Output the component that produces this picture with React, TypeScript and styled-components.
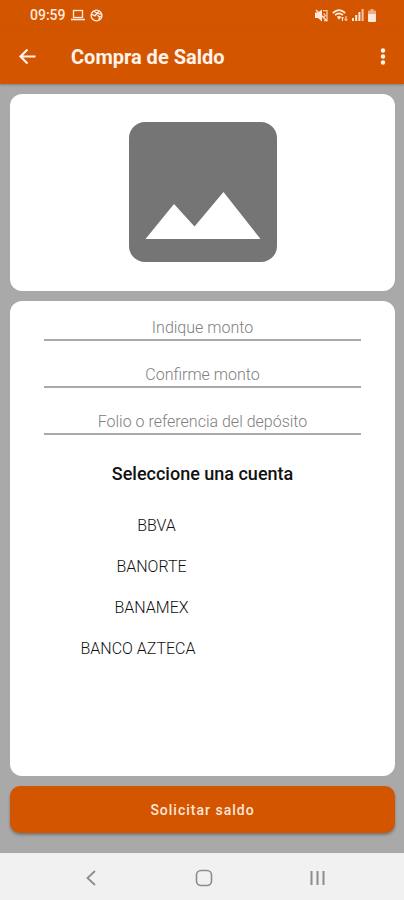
import React from "react";
import styled, { createGlobalStyle } from "styled-components";

const GlobalStyle = createGlobalStyle`
  *, *::before, *::after { box-sizing: border-box; }
  body { margin: 0; background: #a9a9a9; font-family: Roboto, "Liberation Sans", sans-serif; }
  button, input { font: inherit; }
`;

const orange = "#d45500";

const Screen = styled.div`
  display: flex;
  flex-direction: column;
  min-height: 100vh;
  background: #a9a9a9;
`;

const StatusBar = styled.div`
  display: flex;
  align-items: center;
  justify-content: space-between;
  height: 30px;
  padding: 0 28px 0 30px;
  background: ${orange};
  color: #ffe9dc;
  font-size: 14px;
  line-height: 20px;
  font-weight: 500;
`;

const StatusGroup = styled.div<{ $gap: number }>`
  display: flex;
  align-items: center;
  gap: ${({ $gap }) => $gap}px;

  svg { display: block; }
`;

const AppBar = styled.header`
  display: flex;
  align-items: center;
  height: 54px;
  padding: 0 9px 0 15px;
  background: ${orange};
  color: #fff3ec;
  box-shadow: 0 1px 2px rgba(0, 0, 0, 0.25);
`;

const IconButton = styled.button`
  display: flex;
  align-items: center;
  justify-content: center;
  width: 24px;
  height: 40px;
  padding: 0;
  border: 0;
  background: none;
  color: inherit;
`;

const Title = styled.h1`
  flex: 1;
  margin: 0 0 0 32px;
  font-size: 20px;
  line-height: 28px;
  font-weight: 700;
`;

const Content = styled.main`
  display: flex;
  flex: 1;
  flex-direction: column;
  gap: 10px;
  padding: 10px 9px 20px 10px;
`;

const Card = styled.section`
  border-radius: 12px;
  background: #fff;
`;

const PictureCard = styled(Card)`
  display: flex;
  justify-content: center;
  padding: 28px 0 29px;

  svg { display: block; }
`;

const FormCard = styled(Card)`
  display: flex;
  flex: 1;
  flex-direction: column;
  padding: 13px 34px 20px;
`;

const Field = styled.input`
  width: 100%;
  height: 27px;
  margin-bottom: 20px;
  padding: 2px 0 0;
  border: 0;
  border-bottom: 2px solid #aaa;
  border-radius: 0;
  outline: none;
  background: none;
  color: #222;
  font-size: 16px;
  text-align: center;

  &::placeholder { color: #808080; opacity: 1; font-weight: 300; }
`;

const AccountsTitle = styled.h2`
  margin: 7px 0 19px;
  font-size: 18px;
  line-height: 24px;
  font-weight: 500;
  text-align: center;
  color: #111;
`;

const AccountList = styled.ul`
  margin: 0;
  padding: 0;
  list-style: none;
`;

const Account = styled.li<{ $numberWidth: number }>`
  display: flex;
  align-items: center;
  justify-content: center;
  height: 41px;
  padding-right: ${({ $numberWidth }) => $numberWidth}px;
  color: #111;
  font-size: 16px;
  line-height: 20px;
  font-weight: 300;
`;

const SubmitButton = styled.button`
  height: 47px;
  border: 0;
  border-radius: 10px;
  background: ${orange};
  box-shadow: 0 2px 3px rgba(0, 0, 0, 0.3);
  color: #ffe6d8;
  font-size: 14px;
  font-weight: 500;
  letter-spacing: 1px;
`;

const NavBar = styled.nav`
  display: flex;
  align-items: center;
  justify-content: center;
  gap: 89px;
  height: 47px;
  padding: 2px 0 0 4px;
  background: #f1f1f1;
  color: #8c8c8c;
`;

const accounts = [
  { name: "BBVA", numberWidth: 92 },
  { name: "BANORTE", numberWidth: 102 },
  { name: "BANAMEX", numberWidth: 102 },
  { name: "BANCO AZTECA", numberWidth: 129 },
];

const LaptopIcon = () => (
  <svg width="14" height="12" viewBox="0 0 14 12" fill="none" stroke="currentColor" aria-hidden="true">
    <rect x="2.5" y="1.5" width="9" height="7" strokeWidth="1.3" />
    <path d="M0 10.5h14" strokeWidth="1.6" />
  </svg>
);

const BallIcon = () => (
  <svg width="13" height="13" viewBox="0 0 13 13" fill="none" stroke="currentColor" strokeWidth="1.4" aria-hidden="true">
    <circle cx="6.5" cy="6.5" r="5.4" />
    <path d="M1.5 5.2 5 6.8 7 4.4 11.4 5M4 2.2 7 4.4 9 2M7.5 6.2 9.5 8l2-.8M9.5 8 9 10.8" />
  </svg>
);

const MutedIcon = () => (
  <svg width="13" height="13" viewBox="0 0 13 13" fill="none" stroke="currentColor" aria-hidden="true">
    <path d="M0 3.5h3l4-3v12L3 9H0z" fill="currentColor" stroke="none" />
    <path d="M1 1l11 11" strokeWidth="1.3" />
    <path d="M8 1.7h4v9.8H9M8.5 4.5l2 2-2 2" strokeWidth="1.3" opacity=".8" />
  </svg>
);

const WifiIcon = () => (
  <svg width="16" height="13" viewBox="0 0 16 13" fill="none" stroke="currentColor" aria-hidden="true">
    <path d="M.8 4Q7 -1.6 13.2 4M3 6.2q4-3.4 8 0" strokeWidth="1.7" />
    <path d="M4.8 7.8Q7 6 9.2 7.8L7 10.8z" fill="currentColor" stroke="none" />
    <path d="M10.5 12V8M9 9.5 10.5 8 12 9.5M14 7v4.5M12.7 10.3 14 11.7l1.3-1.4" strokeWidth="1" />
  </svg>
);

const SignalIcon = () => (
  <svg width="12" height="12" viewBox="0 0 12 12" fill="currentColor" aria-hidden="true">
    <path d="M0 9h2v3H0zM3.2 6h2v6h-2zM6.4 3h2v9h-2z" />
    <path d="M9.6 0h2v12h-2z" opacity=".75" />
  </svg>
);

const BatteryIcon = () => (
  <svg width="8" height="13" viewBox="0 0 8 13" fill="currentColor" aria-hidden="true">
    <path d="M2.5 0h3v1.5H7q1 0 1 1V5H0V2.5q0-1 1-1h1.5z" opacity=".6" />
    <path d="M0 5h8v7q0 1-1 1H1q-1 0-1-1z" />
  </svg>
);

const BackArrowIcon = () => (
  <svg width="24" height="24" viewBox="0 0 24 24" fill="none" stroke="currentColor" strokeWidth="2.2" aria-hidden="true">
    <path d="M20.5 11.5H6M12.5 4.5 5.5 11.5l7 7" />
  </svg>
);

const MoreIcon = () => (
  <svg width="24" height="24" viewBox="0 0 24 24" fill="currentColor" aria-hidden="true">
    <circle cx="12" cy="5.5" r="2.2" />
    <circle cx="12" cy="11.5" r="2.2" />
    <circle cx="12" cy="17.5" r="2.2" />
  </svg>
);

const PictureIcon = () => (
  <svg width="148" height="140" viewBox="0 0 148 140" role="img" aria-label="Imagen">
    <rect width="148" height="140" rx="16" fill="#757575" />
    <path d="M16.5 117 45 82l20.5 22.5L94.5 70 131.5 117z" fill="#fff" />
  </svg>
);

const NavBackIcon = () => (
  <svg width="24" height="24" viewBox="0 0 24 24" fill="none" stroke="currentColor" strokeWidth="1.8" aria-hidden="true">
    <path d="M16 5 8.5 12l7.5 7" />
  </svg>
);

const NavHomeIcon = () => (
  <svg width="24" height="24" viewBox="0 0 24 24" fill="none" stroke="currentColor" strokeWidth="1.6" aria-hidden="true">
    <rect x="4.5" y="4.5" width="15" height="15" rx="4.5" />
  </svg>
);

const NavRecentsIcon = () => (
  <svg width="24" height="24" viewBox="0 0 24 24" fill="none" stroke="currentColor" strokeWidth="2" aria-hidden="true">
    <path d="M6.5 5v14M12.5 5v14M18.5 5v14" />
  </svg>
);

export default function App() {
  return (
    <Screen>
      <GlobalStyle />
      <StatusBar>
        <StatusGroup $gap={5}>
          <span>09:59</span>
          <LaptopIcon />
          <BallIcon />
        </StatusGroup>
        <StatusGroup $gap={4}>
          <MutedIcon />
          <WifiIcon />
          <SignalIcon />
          <BatteryIcon />
        </StatusGroup>
      </StatusBar>
      <AppBar>
        <IconButton type="button" aria-label="Atrás">
          <BackArrowIcon />
        </IconButton>
        <Title>Compra de Saldo</Title>
        <IconButton type="button" aria-label="Más opciones">
          <MoreIcon />
        </IconButton>
      </AppBar>
      <Content>
        <PictureCard>
          <PictureIcon />
        </PictureCard>
        <FormCard>
          <Field type="text" inputMode="decimal" placeholder="Indique monto" aria-label="Indique monto" />
          <Field type="text" inputMode="decimal" placeholder="Confirme monto" aria-label="Confirme monto" />
          <Field
            type="text"
            placeholder="Folio o referencia del depósito"
            aria-label="Folio o referencia del depósito"
          />
          <AccountsTitle>Seleccione una cuenta</AccountsTitle>
          <AccountList>
            {accounts.map(({ name, numberWidth }) => (
              <Account key={name} $numberWidth={numberWidth}>
                {name}
              </Account>
            ))}
          </AccountList>
        </FormCard>
        <SubmitButton type="button">Solicitar saldo</SubmitButton>
      </Content>
      <NavBar aria-label="Sistema">
        <IconButton type="button" aria-label="Volver">
          <NavBackIcon />
        </IconButton>
        <IconButton type="button" aria-label="Inicio">
          <NavHomeIcon />
        </IconButton>
        <IconButton type="button" aria-label="Recientes">
          <NavRecentsIcon />
        </IconButton>
      </NavBar>
    </Screen>
  );
}
